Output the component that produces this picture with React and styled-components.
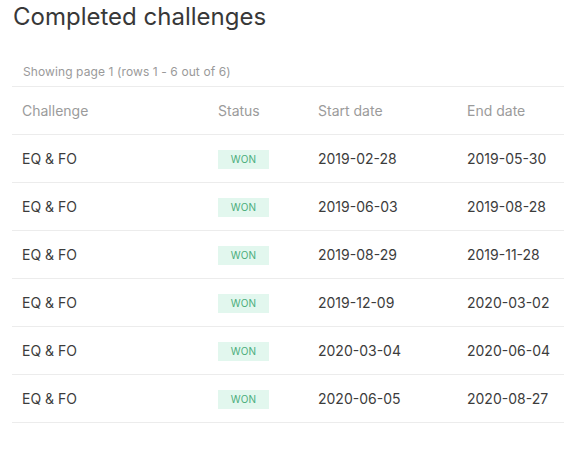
import React from "react";
import styled, { createGlobalStyle } from "styled-components";

const GlobalStyle = createGlobalStyle`
  body {
    margin: 0;
    background: #fff;
    font-family: Inter, "Noto Sans", sans-serif;
  }
`;

const Page = styled.div`
  padding: 2px 0 0 12px;
`;

const Title = styled.h1`
  margin: 0 0 0 1px;
  font-size: 24px;
  line-height: 29px;
  font-weight: 400;
  color: #383838;
`;

const Caption = styled.div`
  margin-top: 33px;
  padding: 0 0 0 11px;
  height: 22px;
  font-size: 12px;
  line-height: 16px;
  letter-spacing: 0.1px;
  color: #9a9a9a;
`;

const Table = styled.table`
  width: 552px;
  border-collapse: collapse;
  font-size: 14px;
`;

const HeadCell = styled.th`
  height: 47px;
  padding: 0 0 0 10px;
  text-align: left;
  font-weight: 400;
  color: #9b9b9b;
  border-top: 1px solid #ececec;
  border-bottom: 1px solid #ececec;
  width: ${(p) => p.$w || "auto"};
`;

const Cell = styled.td`
  height: 47px;
  padding: 0 0 0 10px;
  color: #3c3c3c;
  border-bottom: 1px solid #ececec;
`;

const Badge = styled.span`
  display: inline-flex;
  align-items: center;
  justify-content: center;
  width: 51px;
  height: 19px;
  margin-top: 1px;
  background: #e2f7ee;
  color: #4cad7b;
  font-size: 10px;
  letter-spacing: 0.1px;
`;

const rows = [
  ["2019-02-28", "2019-05-30"],
  ["2019-06-03", "2019-08-28"],
  ["2019-08-29", "2019-11-28"],
  ["2019-12-09", "2020-03-02"],
  ["2020-03-04", "2020-06-04"],
  ["2020-06-05", "2020-08-27"],
];

export default function App() {
  return (
    <Page>
      <GlobalStyle />
      <Title>Completed challenges</Title>
      <Caption>Showing page 1 (rows 1 - 6 out of 6)</Caption>
      <Table>
        <thead>
          <tr>
            <HeadCell $w="186px">Challenge</HeadCell>
            <HeadCell $w="90px">Status</HeadCell>
            <HeadCell $w="139px">Start date</HeadCell>
            <HeadCell>End date</HeadCell>
          </tr>
        </thead>
        <tbody>
          {rows.map(([start, end]) => (
            <tr key={start}>
              <Cell>EQ &amp; FO</Cell>
              <Cell>
                <Badge>WON</Badge>
              </Cell>
              <Cell>{start}</Cell>
              <Cell>{end}</Cell>
            </tr>
          ))}
        </tbody>
      </Table>
    </Page>
  );
}
